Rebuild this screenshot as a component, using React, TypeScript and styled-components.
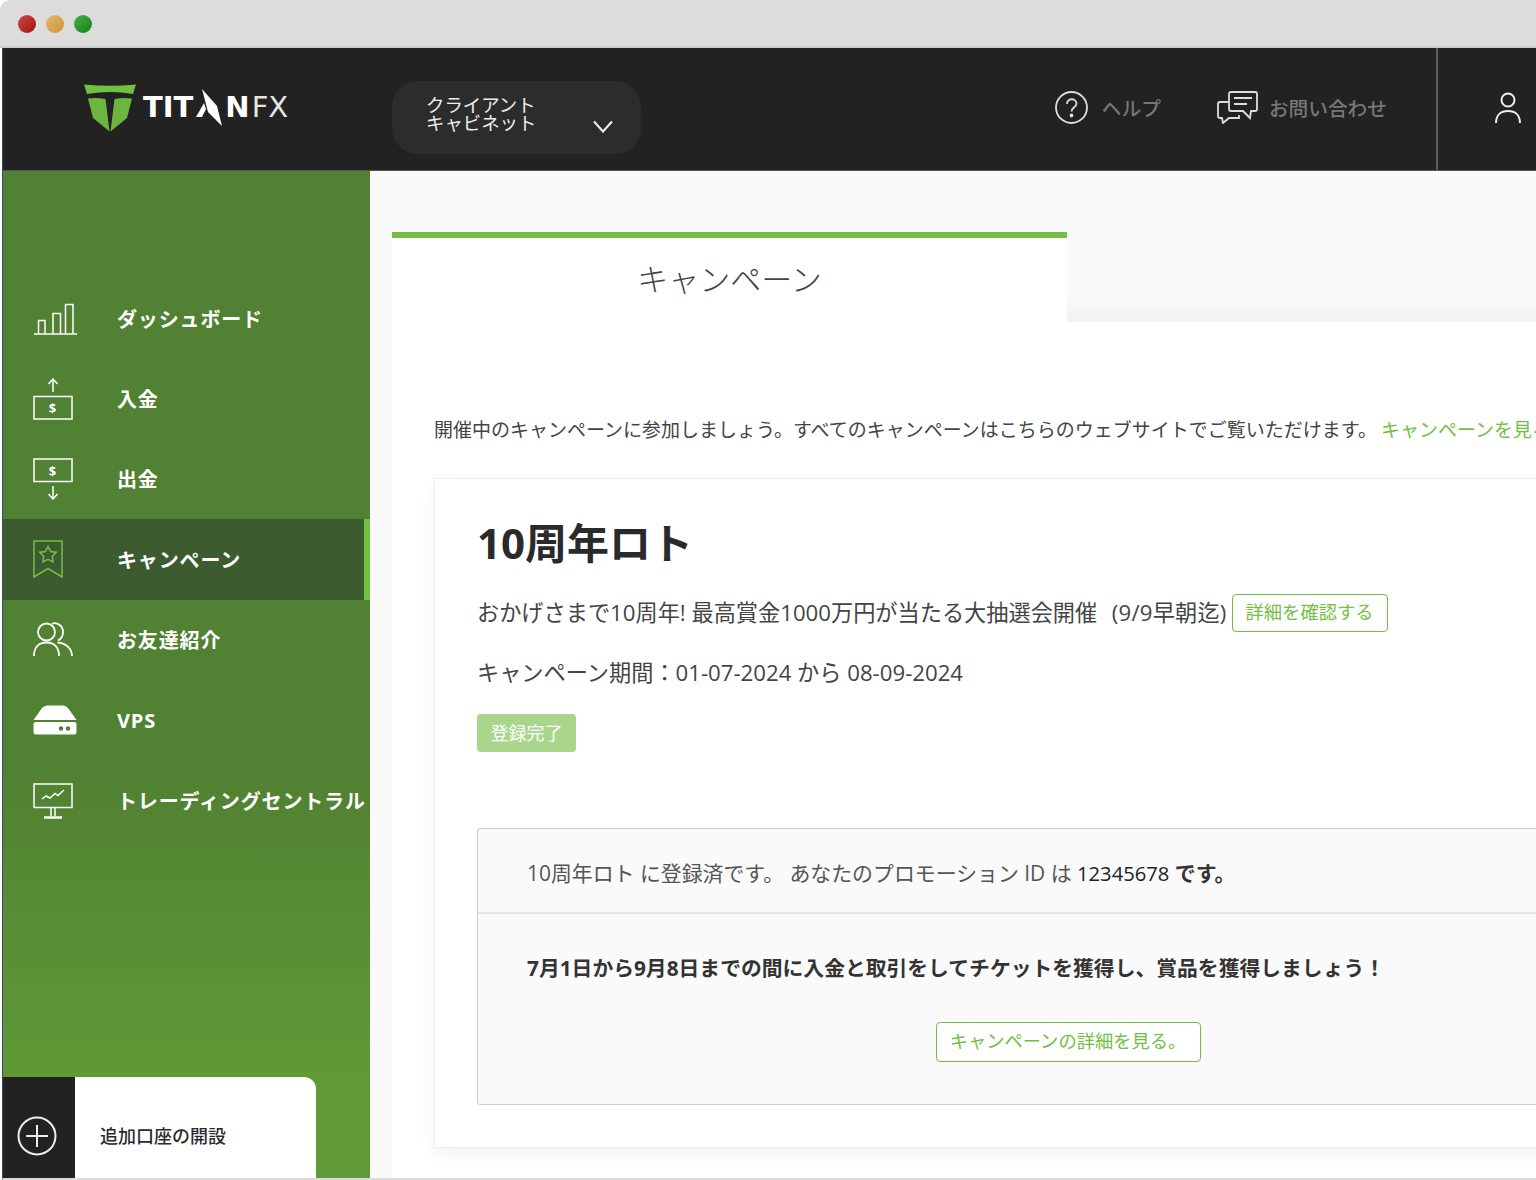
import React, {FC} from 'react';
import styled, {createGlobalStyle} from 'styled-components';

const GlobalStyle = createGlobalStyle`
  html, body {
    margin: 0;
    padding: 0;
    background: #fff;
  }
  * {
    box-sizing: border-box;
  }
`

const Page = styled.div`
  width: 1536px;
  height: 1180px;
  overflow: hidden;
  display: flex;
  flex-direction: column;
  font-family: "Open Sans", "Noto Sans CJK JP", sans-serif;
  color: #333;
  background: #fff;
`

const TitleBar = styled.div`
  height: 48px;
  flex-shrink: 0;
  display: flex;
  align-items: center;
  gap: 10px;
  padding: 2px 0 0 18px;
  background: #dcdcdc;
  border-bottom: 2px solid #c9c9c9;
  border-top-left-radius: 10px;
`

const Light = styled.span<{$color: string}>`
  width: 18px;
  height: 18px;
  border-radius: 50%;
  background: linear-gradient(135deg, rgba(255, 255, 255, .25), rgba(0, 0, 0, .08)), ${p => p.$color};
`

const Window = styled.div`
  flex: 1;
  min-height: 0;
  display: flex;
  flex-direction: column;
  margin-left: 2px;
  border-left: 1px solid #3d4a63;
  border-bottom: 2px solid #dcdcdc;
`

const Header = styled.header`
  height: 123px;
  flex-shrink: 0;
  display: flex;
  align-items: stretch;
  background: #222;
  border-bottom: 1px solid #555;
`

const LogoBox = styled.div`
  width: 389px;
  padding: 36px 0 0 81px;
  display: flex;
  align-items: flex-start;
  flex-shrink: 0;
`

const LogoText = styled.div`
  display: flex;
  align-items: flex-start;
  height: 40px;
  margin-left: 7px;
  padding-top: 3px;
  font-family: "DejaVu Sans", sans-serif;
  font-size: 29px;
  line-height: 40px;
  font-weight: 700;
  color: #fff;
`

const LogoBlade = styled.svg`
  margin-top: 1px;
  flex-shrink: 0;
`

const LogoThin = styled.span`
  margin-left: 2px;
  font-weight: 400;
  color: #e4e4e4;
`

const AccountSelect = styled.div`
  width: 249px;
  height: 73px;
  margin-top: 33px;
  padding: 15px 28px 0 34px;
  display: flex;
  justify-content: space-between;
  background: #2c2c2c;
  border-radius: 26px;
  flex-shrink: 0;
`

const AccountLabel = styled.div`
  font-size: 18.4px;
  line-height: 18px;
  color: #eee;
  width: 112px;
`

const Chevron = styled.svg`
  width: 20px;
  height: 13px;
  margin-top: 24px;
`

const HeaderLinks = styled.div`
  margin-left: auto;
  display: flex;
  align-items: center;
  padding-bottom: 3px;
`

const HeaderLink = styled.a<{$gap: number; $right: number}>`
  display: flex;
  align-items: center;
  gap: ${p => p.$gap}px;
  margin-right: ${p => p.$right}px;
  font-size: 19.7px;
  font-weight: 500;
  color: #777;
`

const UserCell = styled.div`
  width: 100px;
  flex-shrink: 0;
  display: flex;
  align-items: center;
  padding: 0 0 3px 57px;
  border-left: 2px solid #5c5c5c;
`

const Body = styled.div`
  flex: 1;
  min-height: 0;
  display: flex;
`

const Sidebar = styled.nav`
  width: 367px;
  flex-shrink: 0;
  display: flex;
  flex-direction: column;
  padding-top: 107px;
  background: linear-gradient(#518132 60%, #5f9a37 90%);
`

const NavItem = styled.a<{$active?: boolean}>`
  height: 80.4px;
  flex-shrink: 0;
  display: flex;
  align-items: center;
  padding-left: 30px;
  font-size: 20px;
  font-weight: 700;
  letter-spacing: .85px;
  white-space: nowrap;
  color: #fff;
  background: ${p => p.$active ? '#3c5c2f' : 'transparent'};
  border-right: ${p => p.$active ? '6px solid #72bf44' : '0'};
`

const NavIcon = styled.span`
  width: 84px;
  flex-shrink: 0;
  display: flex;
  align-items: center;
`

const AddAccount = styled.a`
  margin-top: auto;
  width: 313px;
  height: 101px;
  display: flex;
`

const PlusCell = styled.span`
  width: 72px;
  display: flex;
  align-items: center;
  justify-content: center;
  background: #222;
  padding: 16px 4px 0 0;
`

const AddLabel = styled.span`
  flex: 1;
  display: flex;
  align-items: center;
  padding: 15px 0 0 25px;
  font-size: 18px;
  font-weight: 500;
  color: #2b2b2b;
  background: #fff;
  border-top-right-radius: 12px;
`

const Main = styled.main`
  flex: 1;
  min-width: 0;
  overflow: hidden;
  padding: 61px 0 0 22px;
  background: #fafafa;
`

const Tabs = styled.div`
  display: flex;
`

const ActiveTab = styled.div`
  width: 675px;
  height: 90px;
  padding-top: 18px;
  text-align: center;
  font-size: 31px;
  line-height: 46px;
  font-weight: 300;
  color: #444;
  background: #fff;
  border-top: 6px solid #72bf44;
`

const TabRest = styled.div`
  flex: 1;
  height: 90px;
  background: linear-gradient(#fafafa 70%, #f1f1f1);
`

const Panel = styled.section`
  width: 1352px;
  height: 860px;
  padding: 91px 0 0 42px;
  background: #fff;
`

const Intro = styled.p`
  margin: 0;
  font-size: 19px;
  line-height: 34px;
  white-space: nowrap;
  color: #444;
`

const GreenLink = styled.a`
  color: #72bf44;
  margin-left: 4px;
`

const Card = styled.article`
  width: 1268px;
  height: 670px;
  margin-top: 31px;
  padding: 35px 42px 0;
  background: #fff;
  border: 1px solid #eee;
  box-shadow: 0 6px 16px rgba(0, 0, 0, .05);
`

const CardTitle = styled.h2`
  margin: 0;
  font-size: 42px;
  line-height: 58px;
  font-weight: 700;
  color: #2a2a2a;
`

const CardLine = styled.div`
  display: flex;
  align-items: center;
  gap: 5px;
  margin-top: 21px;
  font-size: 22.2px;
  line-height: 40px;
  white-space: pre;
  color: #444;
`

const DateNote = styled.span`
  margin-left: 3px;
  letter-spacing: .2px;
`

const PeriodLine = styled.div`
  margin-top: 20px;
  font-size: 22.2px;
  line-height: 40px;
  white-space: nowrap;
  color: #444;
`

const OutlineButton = styled.a<{$w: number; $h: number}>`
  width: ${p => p.$w}px;
  height: ${p => p.$h}px;
  flex-shrink: 0;
  display: flex;
  align-items: center;
  justify-content: center;
  padding-bottom: 2px;
  font-size: 18.3px;
  line-height: 24px;
  color: #72bf44;
  background: #fff;
  border: 1px solid #72bf44;
  border-radius: 4px;
`

const Badge = styled.span`
  width: 99px;
  height: 38px;
  margin-top: 21px;
  display: flex;
  align-items: center;
  justify-content: center;
  padding-bottom: 2px;
  font-size: 18px;
  color: #fff;
  background: #a8d68a;
  border-radius: 4px;
`

const InfoBox = styled.div`
  width: 1182px;
  height: 277px;
  margin-top: 76px;
  background: #fafafa;
  border: 1px solid #ccc;
  border-radius: 3px;
`

const InfoTop = styled.div`
  height: 85px;
  display: flex;
  align-items: center;
  padding: 3px 0 0 49px;
  font-size: 20.9px;
  color: #555;
  border-bottom: 2px solid #e6e6e6;
`

const InfoDark = styled.span`
  font-size: 20.2px;
  color: #222;
`

const InfoBold = styled.b`
  color: #333;
`

const InfoBottom = styled.div`
  display: flex;
  flex-direction: column;
  align-items: center;
`

const InfoNote = styled.p`
  align-self: flex-start;
  margin: 37px 0 37px 49px;
  font-size: 20.8px;
  line-height: 34px;
  font-weight: 700;
  color: #333;
`

const Logo = () => <svg width="52" height="48" viewBox="0 0 52 48">
  <path d="M0 0.5 Q26 3 52 0.5 L49 10 Q26 6 3 10 Z" fill="#72bf44"/>
  <path d="M4 14.5 Q13 13.5 21.5 15 L25.5 47.5 L9 34 Z" fill="#6cb63f"/>
  <path d="M48 14.5 Q39 13.5 30.5 15 L26.5 47.5 L43 34 Z" fill="#6cb63f"/>
</svg>

const ChartIcon = () => <svg width="44" height="36" viewBox="-1 -3.4 44 36" fill="none" stroke="#fff" strokeWidth="1.5">
  <path d="M0 30.5 H43"/>
  <path d="M4.5 30 V17 H11 V30 M19 30 V10 H26.5 V30 M31.5 30 V1 H39 V30"/>
</svg>

const MoneyUpIcon = () => <svg width="41" height="42" viewBox="0 0 41 42" fill="none" stroke="#fff" strokeWidth="1.5">
  <path d="M20 14 V1 M15.5 6 L20 1 L24.5 6"/>
  <rect x="1" y="18.5" width="38" height="22.5"/>
  <text x="20" y="35" fontSize="13" fontWeight="700" textAnchor="middle" fill="#fff" stroke="none">$</text>
</svg>

const MoneyDownIcon = () => <svg width="41" height="42" viewBox="0 0 41 42" fill="none" stroke="#fff" strokeWidth="1.5">
  <rect x="1" y="1" width="38" height="22.5"/>
  <text x="20" y="17.5" fontSize="13" fontWeight="700" textAnchor="middle" fill="#fff" stroke="none">$</text>
  <path d="M20 28 V41 M15.5 36 L20 41 L24.5 36"/>
</svg>

const BookmarkIcon = () => <svg width="30" height="38" viewBox="0 0 30 38" fill="none" stroke="#72bf44" strokeWidth="1.5">
  <path d="M1 1 H29 V37 L15 28.5 L1 37 Z"/>
  <path d="M15 6.5 L17.6 11.6 L23.2 12.4 L19.2 16.4 L20.1 22 L15 19.3 L9.9 22 L10.8 16.4 L6.8 12.4 L12.4 11.6 Z"/>
</svg>

const FriendsIcon = () => <svg width="40" height="35" viewBox="0 0 40 35" fill="none" stroke="#fff" strokeWidth="1.8">
  <circle cx="13.5" cy="10" r="8.5"/>
  <path d="M1 34 C1 25 6 20.5 13.5 20.5 C21 20.5 26 25 26 34"/>
  <path d="M19 1.6 C25 0 30 4 30 10 C30 14 28 17 25 18.5"/>
  <path d="M24.5 20.5 C32 21 39 26 39 34"/>
</svg>

const ServerIcon = () => <svg width="44" height="30" viewBox="0 0 44 30">
  <path d="M0.5 15 L9 3 Q11 0.5 14 0.5 H30 Q33 0.5 35 3 L43.5 15 Z" fill="#fff"/>
  <path d="M0.5 19 Q0.5 17 3 17 H41 Q43.5 17 43.5 19 V27 Q43.5 29.5 41 29.5 H3 Q0.5 29.5 0.5 27 Z" fill="#fff"/>
  <circle cx="28" cy="23.5" r="2.2" fill="#518132"/>
  <circle cx="35" cy="23.5" r="2.2" fill="#518132"/>
</svg>

const MonitorIcon = () => <svg width="40" height="36" viewBox="0 0 40 36" fill="none" stroke="#fff" strokeWidth="1.5">
  <rect x="1" y="1" width="38" height="23.5"/>
  <path d="M9 16 L13 13 L17 15 L22 10.5 L25 12.5 L31 7"/>
  <path d="M18 25 V33 M22 25 V33"/>
  <path d="M11 34.5 H29" strokeWidth="2.5"/>
</svg>

const navItems: {label: string; icon: React.ReactNode; active?: boolean}[] = [
  {label: 'ダッシュボード', icon: <ChartIcon/>},
  {label: '入金', icon: <MoneyUpIcon/>},
  {label: '出金', icon: <MoneyDownIcon/>},
  {label: 'キャンペーン', icon: <BookmarkIcon/>, active: true},
  {label: 'お友達紹介', icon: <FriendsIcon/>},
  {label: 'VPS', icon: <ServerIcon/>},
  {label: 'トレーディングセントラル', icon: <MonitorIcon/>},
]

const App: FC = () =>
  <Page>
    <GlobalStyle/>
    <TitleBar>
      <Light $color="#b51010"/>
      <Light $color="#dba13c"/>
      <Light $color="#119011"/>
    </TitleBar>
    <Window>
      <Header>
        <LogoBox>
          <Logo/>
          <LogoText>
            TIT
            <LogoBlade width="32" height="38" viewBox="0 0 32 38" fill="#fff">
              <path d="M9 1 L24 18 L29 38 L15 24 Z"/>
              <path d="M3 29 L11 15 L13 21 L9 29 Z"/>
            </LogoBlade>
            N
            <LogoThin>FX</LogoThin>
          </LogoText>
        </LogoBox>
        <AccountSelect>
          <AccountLabel>クライアント キャビネット</AccountLabel>
          <Chevron viewBox="0 0 20 13" fill="none" stroke="#e8e8e8" strokeWidth="2.2"><path d="M1 1.5 L10 11.5 L19 1.5"/></Chevron>
        </AccountSelect>
        <HeaderLinks>
          <HeaderLink $gap={14} $right={56}>
            <svg width="33" height="33" viewBox="0 0 33 33" fill="none" stroke="#ddd" strokeWidth="1.8">
              <circle cx="16.5" cy="16.5" r="15.5"/>
              <path d="M12 13 C12 6.5 21.5 7 21.5 12.5 C21.5 16 16.5 16.5 16.5 20.5"/>
              <circle cx="16.5" cy="24.5" r="1" fill="#ddd"/>
            </svg>
            ヘルプ
          </HeaderLink>
          <HeaderLink $gap={11} $right={49}>
            <svg width="41" height="33" viewBox="0 0 41 33" fill="none" stroke="#ddd" strokeWidth="1.8">
              <path d="M12 3 Q12 1 14 1 H38 Q40 1 40 3 V18 Q40 20 38 20 H34 L33 27 L26 20 H14 Q12 20 12 18 Z"/>
              <path d="M12 11 H3 Q1 11 1 13 V25 Q1 27 3 27 H5 L6 32 L12 27 H22 V24"/>
              <path d="M17 7 H35 M17 13 H30"/>
            </svg>
            お問い合わせ
          </HeaderLink>
        </HeaderLinks>
        <UserCell>
          <svg width="26" height="32" viewBox="0 0 26 32" fill="none" stroke="#eee" strokeWidth="2">
            <circle cx="13" cy="8" r="6.5"/>
            <path d="M1 31 C1 23 6 19 13 19 C20 19 25 23 25 31"/>
          </svg>
        </UserCell>
      </Header>
      <Body>
        <Sidebar>
          {navItems.map(item =>
            <NavItem key={item.label} $active={item.active}>
              <NavIcon>{item.icon}</NavIcon>
              {item.label}
            </NavItem>)}
          <AddAccount>
            <PlusCell>
              <svg width="40" height="40" viewBox="0 0 40 40" fill="none" stroke="#eee" strokeWidth="2">
                <circle cx="20" cy="20" r="18.5"/>
                <path d="M20 9 V31 M9 20 H31"/>
              </svg>
            </PlusCell>
            <AddLabel>追加口座の開設</AddLabel>
          </AddAccount>
        </Sidebar>
        <Main>
          <Tabs>
            <ActiveTab>キャンペーン</ActiveTab>
            <TabRest/>
          </Tabs>
          <Panel>
            <Intro>
              開催中のキャンペーンに参加しましょう。すべてのキャンペーンはこちらのウェブサイトでご覧いただけます。
              <GreenLink>キャンペーンを見る</GreenLink>
            </Intro>
            <Card>
              <CardTitle>10周年ロト</CardTitle>
              <CardLine>
                <span>おかげさまで10周年! 最高賞金1000万円が当たる大抽選会開催  <DateNote>(9/9早朝迄)</DateNote></span>
                <OutlineButton $w={156} $h={38}>詳細を確認する</OutlineButton>
              </CardLine>
              <PeriodLine>キャンペーン期間：01-07-2024 から 08-09-2024</PeriodLine>
              <Badge>登録完了</Badge>
              <InfoBox>
                <InfoTop>
                  <span>10周年ロト に登録済です。 あなたのプロモーション ID は <InfoDark>12345678</InfoDark> <InfoBold>です。</InfoBold></span>
                </InfoTop>
                <InfoBottom>
                  <InfoNote>7月1日から9月8日までの間に入金と取引をしてチケットを獲得し、賞品を獲得しましょう！</InfoNote>
                  <OutlineButton $w={265} $h={40}>キャンペーンの詳細を見る。</OutlineButton>
                </InfoBottom>
              </InfoBox>
            </Card>
          </Panel>
        </Main>
      </Body>
    </Window>
  </Page>

export default App
